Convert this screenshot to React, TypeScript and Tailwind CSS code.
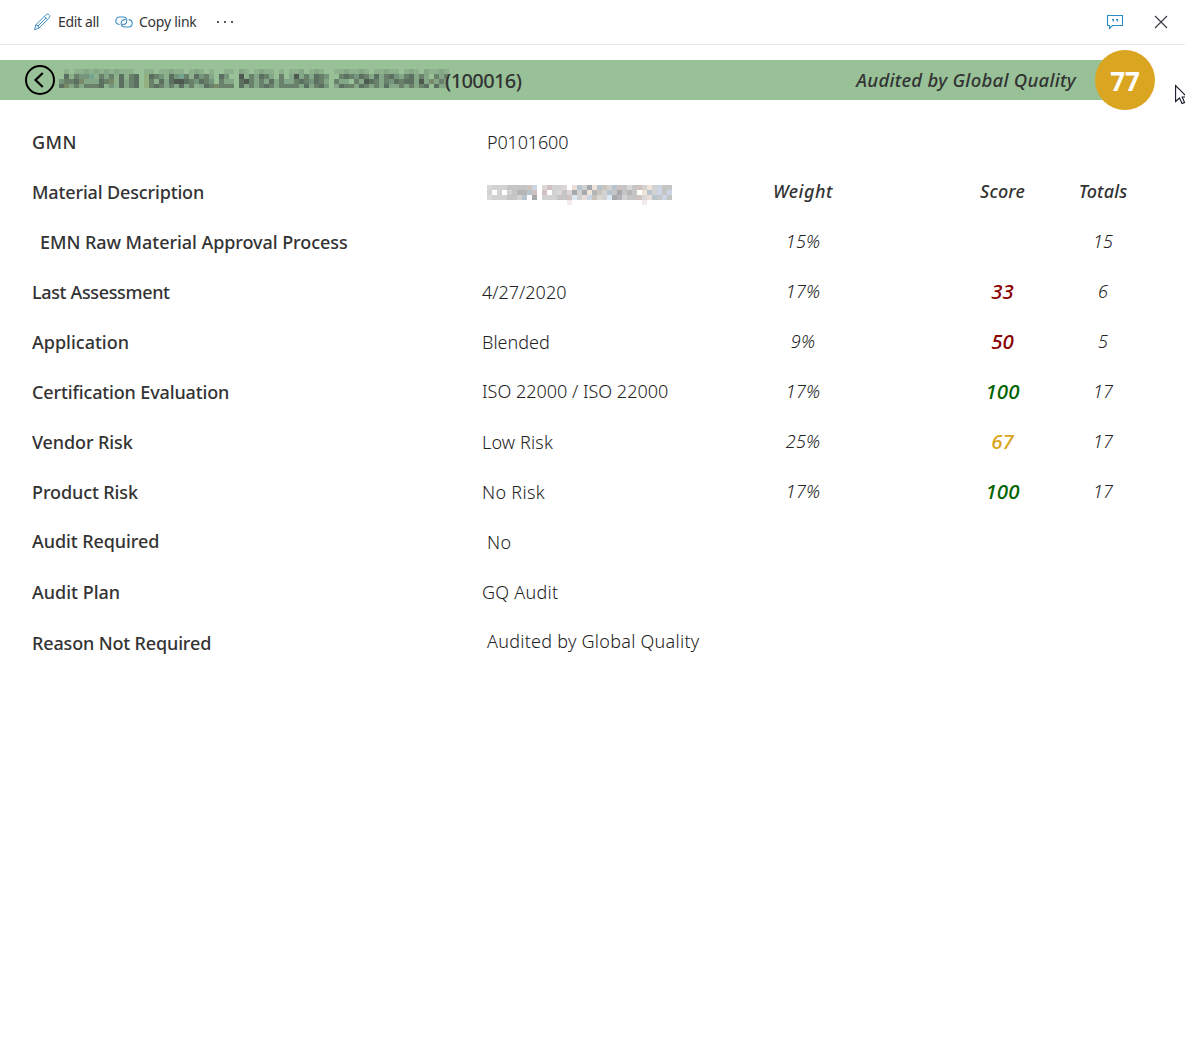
import type { ReactNode } from "react";

const titleShades: Record<string, string> = {
  a: "#8cb18c",
  b: "#83a787",
  c: "#75967c",
  d: "#69816a",
  e: "#5b7060",
  f: "#4e5a50",
  g: "#92af80",
  h: "#75a58c",
  i: "#788a68",
};

const titleMosaic = [
  ".a.aababababaaa..aa.aabaa.aba.a..aa.ba.abaa.a.aab.aba..aabaaba.aabaa.aba.baaba",
  ".eadcchadbdaeade.gedcaechdaecdb.ec..fadbedb.d.bfbdbedc..dedcedbebdecbdebdb.dbd",
  "cddeibbbediaebde.gdaebeffedcedc.dbb.efdbdbebdbbdedcedb.dbb.dbfedbdcedeebfbibdb",
  "eibdbdddeacaebde.gdedbdbebdabediddd.ebdbdedbddddbebdec.beddbedbdbebbdbdbde.ebb",
];

const valueShades: Record<string, string> = {
  a: "#dcd8d8",
  b: "#d2d2d2",
  c: "#c5c5c6",
  d: "#b3b5b7",
  e: "#a6a8ab",
  f: "#b8c4cd",
  g: "#d0c2be",
  h: "#eadcd7",
  i: "#cbd5e4",
  j: "#eee5d8",
  k: "#dce9f2",
  l: "#f2eaed",
  m: "#c9c4b8",
};

const valueMosaic = [
  "abbbccccgi.agbba.hfbejfmbfgcacgbjbicc",
  "b.b.bcddfg.g.bacaebejdmbfcecdc.jfbici",
  "abbbccbf.e.bbbccgkbhimabkedbccgahfcic",
  "................l..............l.....",
];

function Mosaic({ rows, shades, className }: { rows: string[]; shades: Record<string, string>; className: string }) {
  return (
    <div className={className}>
      {rows.map((row, y) => (
        <div key={y} className="flex h-[5px]">
          {row.split("").map((c, x) => (
            <div key={x} className="h-[5px] w-[5px] shrink-0" style={{ backgroundColor: shades[c] }} />
          ))}
        </div>
      ))}
    </div>
  );
}

const PencilIcon = () => (
  <svg width="18" height="18" viewBox="0 0 18 18" fill="none" stroke="#3d8cc0" strokeWidth="1" strokeLinejoin="round">
    <path d="M1.500 16.700 2.700 12 12.900 1.800C13.900.9 15.200 1 16.100 1.800 16.900 2.700 17 4 16.100 5L5.900 15.200ZM11.300 3.400 14.500 6.600M2.700 12C4.600 12.100 5.900 13.300 5.900 15.200M13 5 5 13" />
  </svg>
);

const LinkIcon = () => (
  <svg width="18" height="12" viewBox="0 0 18 12" fill="none" stroke="#3d8cc0" strokeWidth="1.1" strokeLinecap="round">
    <path d="M4.200 8.500C2.200 8.300.8 6.700.8 4.800.8 2.700 2.500 1 4.600 1H8.200C10.300 1 11.800 2.700 11.800 4.700 11.800 6.700 10.300 8.400 8.300 8.400H7.700" />
    <path d="M10.300 3.600H9.800C7.700 3.600 6.100 5.300 6.100 7.300 6.100 9.400 7.700 11 9.800 11H13.500C15.600 11 17.200 9.400 17.200 7.300 17.200 5.400 15.800 3.900 14 3.600" />
  </svg>
);

const ChatIcon = () => (
  <svg width="18" height="16" viewBox="0 0 18 16" fill="none" stroke="#2b8ac0" strokeWidth="1.1">
    <path d="M1.500 1.500H16.500V11.500H6.500L3.500 14.500V11.500H1.500Z" />
    <path d="M6 5.500H8M7.500 5V6.300L6.800 7.300M10 5.500H12M11.500 5V6.300L10.800 7.300" strokeWidth="1.200" />
  </svg>
);

const CloseIcon = () => (
  <svg width="14" height="14" viewBox="0 0 14 14" fill="none" stroke="#3a3340" strokeWidth="1.1">
    <path d="M1 1 13 13M13 1 1 13" />
  </svg>
);

const BackIcon = () => (
  <svg width="30" height="30" viewBox="0 0 30 30" fill="none" stroke="#000" strokeWidth="2">
    <circle cx="15" cy="15" r="14" />
    <path d="M17.800 8 10.500 15 17.800 22" strokeWidth="2.200" />
  </svg>
);

type Row = {
  label: string;
  labelClass?: string;
  value?: ReactNode;
  valueClass?: string;
  weight?: string;
  score?: string;
  scoreClass?: string;
  total?: string;
};

const rows: Row[] = [
  { label: "GMN", labelClass: "tracking-[0.4px]", value: "P0101600", valueClass: "pl-[5px] tracking-[-0.15px]" },
  {
    label: "Material Description",
    labelClass: "tracking-[-0.15px]",
    value: <Mosaic rows={valueMosaic} shades={valueShades} className="pt-[5px]" />,
    valueClass: "pl-[5px]",
  },
  {
    label: "EMN Raw Material Approval Process",
    labelClass: "pl-2 tracking-[-0.06px]",
    weight: "15%",
    total: "15",
  },
  {
    label: "Last Assessment",
    labelClass: "tracking-[-0.35px]",
    value: "4/27/2020",
    weight: "17%",
    score: "33",
    scoreClass: "text-[#8b0000]",
    total: "6",
  },
  {
    label: "Application",
    value: "Blended",
    weight: "9%",
    score: "50",
    scoreClass: "text-[#8b0000]",
    total: "5",
  },
  {
    label: "Certification Evaluation",
    labelClass: "tracking-[-0.14px]",
    value: "ISO 22000 / ISO 22000",
    valueClass: "pb-[2px]",
    weight: "17%",
    score: "100",
    scoreClass: "text-[#006400]",
    total: "17",
  },
  {
    label: "Vendor Risk",
    labelClass: "tracking-[-0.1px]",
    value: "Low Risk",
    valueClass: "tracking-[0.15px]",
    weight: "25%",
    score: "67",
    scoreClass: "text-[#daa520]",
    total: "17",
  },
  {
    label: "Product Risk",
    labelClass: "tracking-[-0.1px]",
    value: "No Risk",
    valueClass: "tracking-[0.3px]",
    weight: "17%",
    score: "100",
    scoreClass: "text-[#006400]",
    total: "17",
  },
  {
    label: "Audit Required",
    labelClass: "pb-[2px] tracking-[-0.08px]",
    value: "No",
    valueClass: "pl-[5px] tracking-[0.5px]",
  },
  { label: "Audit Plan", value: "GQ Audit", valueClass: "tracking-[0.25px]" },
  {
    label: "Reason Not Required",
    labelClass: "pt-[2px] tracking-[-0.15px]",
    value: "Audited by Global Quality",
    valueClass: "pl-[5px] pb-[2px] tracking-[0.26px]",
  },
];

export default function App() {
  return (
    <div className="relative h-[1040px] w-full overflow-hidden bg-white font-['Noto_Sans',sans-serif] text-[#333]">
      <header className="flex h-[45px] items-center border-b border-[#eaeaea] pr-[17px] pl-[33px] text-[14px] leading-5">
        <button className="flex items-center gap-[7px]">
          <PencilIcon />
          <span className="w-[57px] text-left tracking-[-0.35px] whitespace-nowrap">Edit all</span>
        </button>
        <button className="flex items-center gap-[6px]">
          <LinkIcon />
          <span className="w-[78px] text-left tracking-[-0.25px] whitespace-nowrap">Copy link</span>
        </button>
        <button className="flex gap-[5px]" aria-label="More">
          <i className="size-[2px] bg-[#555]" />
          <i className="size-[2px] bg-[#555]" />
          <i className="size-[2px] bg-[#555]" />
        </button>
        <div className="ml-auto flex items-center gap-[30px]">
          <ChatIcon />
          <CloseIcon />
        </div>
      </header>

      <section className="mt-[15px] flex h-10 items-center">
        <div className="flex h-10 w-[1125px] items-center bg-[#98c198] pl-[25px]">
          <BackIcon />
          <Mosaic rows={titleMosaic} shades={titleShades} className="mt-[-3px] -mr-[4px] ml-[4px] h-[19px] w-[390px] overflow-hidden" />
          <h1 className="pt-px text-[20px] leading-10 font-medium tracking-[-0.6px]">(100016)</h1>
          <span className="mr-[49px] ml-auto text-[18.5px] leading-10 font-medium tracking-[0.27px] italic">
            Audited by Global Quality
          </span>
        </div>
        <div className="-ml-[30px] flex size-[60px] items-center justify-center rounded-full bg-[#daa520] pt-[2px] text-[26px] leading-none font-bold text-white">
          77
        </div>
      </section>

      <main className="pt-[17px] pl-8 text-[18px] leading-6">
        {rows.map((r, i) => (
          <div key={r.label} className="grid h-[50px] grid-cols-[450px_271px_100px_99px_100px_101px] items-center">
            <div className={`font-medium ${r.labelClass ?? ""}`}>{r.label}</div>
            <div className={`font-light text-[#222] ${r.valueClass ?? ""}`}>{r.value}</div>
            {i === 1 ? (
              <div className="pb-[2px] text-center font-medium tracking-[0.5px] italic">Weight</div>
            ) : (
              <div className="pb-[2px] text-center font-light tracking-[0.15px] text-[#222] italic">{r.weight}</div>
            )}
            <div />
            {i === 1 ? (
              <div className="pb-[2px] pl-px text-center font-medium tracking-[0.2px] italic">Score</div>
            ) : (
              <div className={`pb-[3px] pl-px text-center text-[20.5px] font-medium italic ${r.scoreClass ?? ""}`}>{r.score}</div>
            )}
            {i === 1 ? (
              <div className="pb-[2px] pl-px text-center font-medium tracking-[0.15px] italic">Totals</div>
            ) : (
              <div className="pb-[2px] pl-px text-center font-light text-[#222] italic">{r.total}</div>
            )}
          </div>
        ))}
      </main>

      <svg className="absolute top-[84px] left-[1175px]" width="10" height="22" viewBox="0 0 10 22" fill="#fff" stroke="#111827" strokeWidth="1.100">
        <path d="M.6 1.500V17.500L4.500 14 7 19.500 9.500 18.500 7.200 13H12Z" />
      </svg>
    </div>
  );
}
